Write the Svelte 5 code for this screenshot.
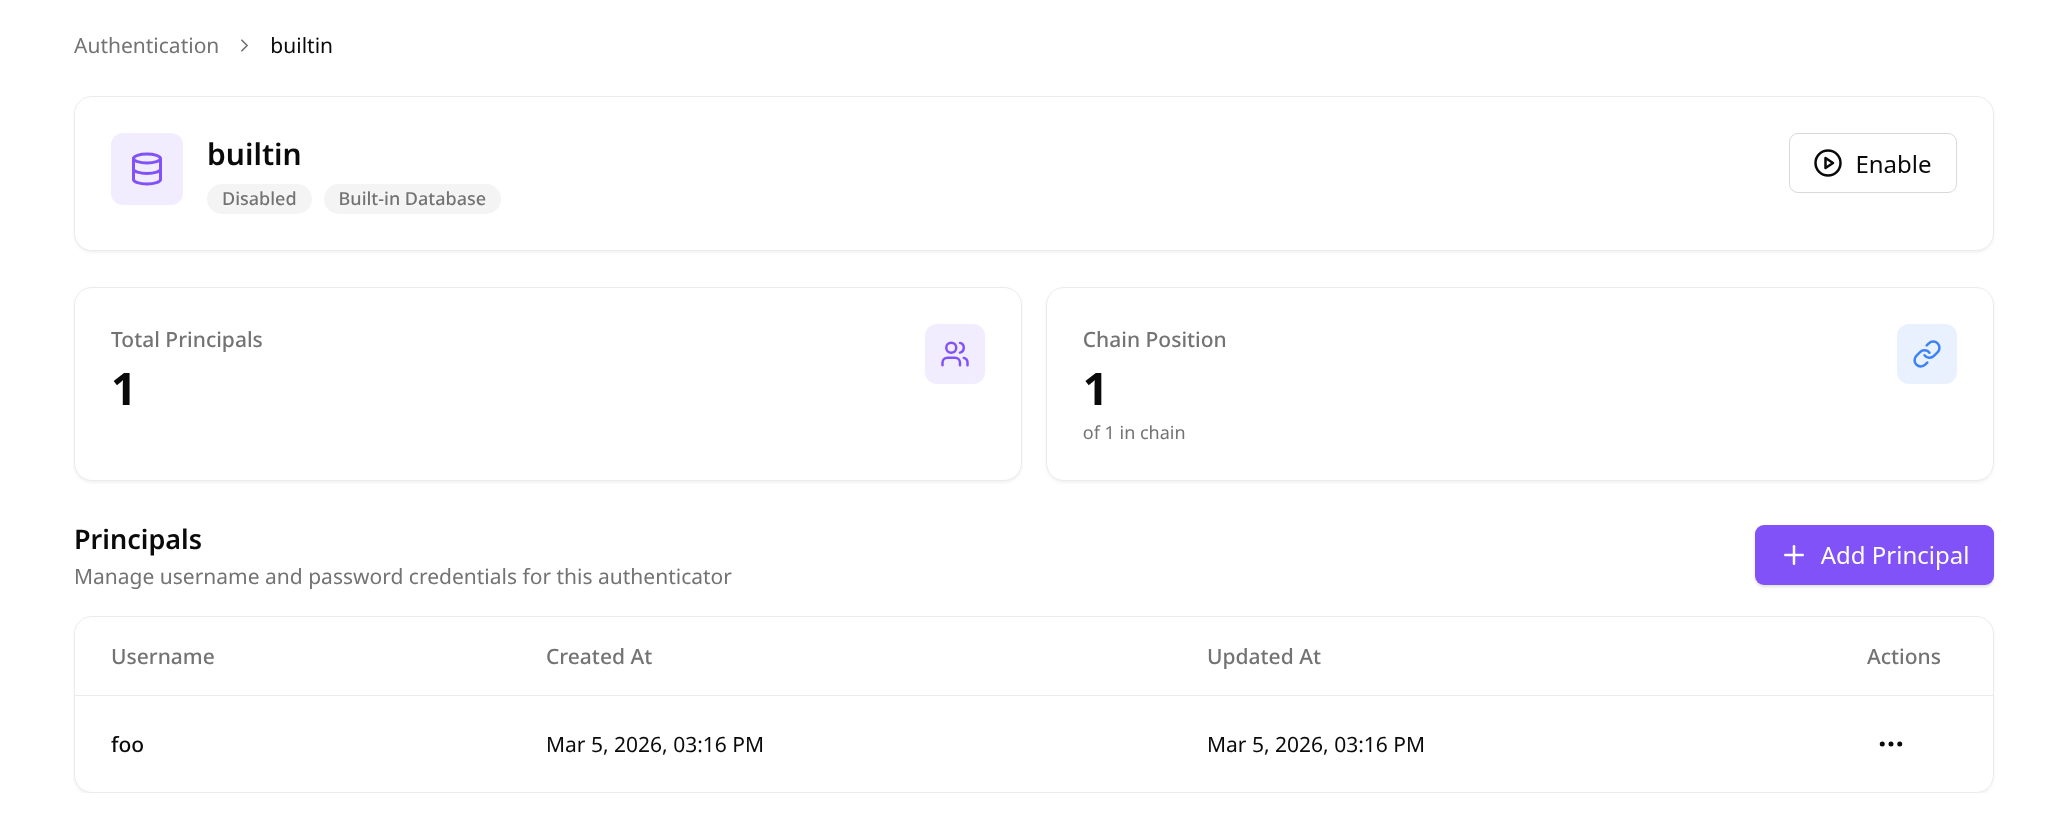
<script>
  const rows = [{ name: 'foo', created: 'Mar 5, 2026, 03:16 PM', updated: 'Mar 5, 2026, 03:16 PM' }];
</script>

<div class="page">
  <nav class="crumbs">
    <span class="crumb-link">Authentication</span>
    <svg class="chev" viewBox="0 0 24 24"><path d="m9 18 6-6-6-6" /></svg>
    <span class="crumb-current">builtin</span>
  </nav>

  <section class="card head">
    <div class="head-left">
      <div class="tile tile-lg violet">
        <svg class="ic36" viewBox="0 0 24 24"><ellipse cx="12" cy="5" rx="9" ry="3" /><path d="M3 5V19A9 3 0 0 0 21 19V5" /><path d="M3 12A9 3 0 0 0 21 12" /></svg>
      </div>
      <div>
        <h1>builtin</h1>
        <div class="badges"><span class="badge">Disabled</span><span class="badge">Built-in Database</span></div>
      </div>
    </div>
    <button class="btn outline">
      <svg class="ic30" viewBox="0 0 24 24"><circle cx="12" cy="12" r="10" /><polygon points="10 8 16 12 10 16 10 8" /></svg>
      Enable
    </button>
  </section>

  <div class="stats">
    <section class="card stat">
      <div class="stat-text">
        <div class="label">Total Principals</div>
        <div class="num">1</div>
      </div>
      <div class="tile violet">
        <svg class="ic30" viewBox="0 0 24 24"><path d="M16 21v-2a4 4 0 0 0-4-4H6a4 4 0 0 0-4 4v2" /><circle cx="9" cy="7" r="4" /><path d="M22 21v-2a4 4 0 0 0-3-3.87" /><path d="M16 3.13a4 4 0 0 1 0 7.75" /></svg>
      </div>
    </section>
    <section class="card stat">
      <div class="stat-text">
        <div class="label">Chain Position</div>
        <div class="num">1</div>
        <div class="sub">of 1 in chain</div>
      </div>
      <div class="tile blue">
        <svg class="ic30" viewBox="0 0 24 24"><path d="M10 13a5 5 0 0 0 7.54.54l3-3a5 5 0 0 0-7.07-7.07l-1.72 1.71" /><path d="M14 11a5 5 0 0 0-7.54-.54l-3 3a5 5 0 0 0 7.07 7.07l1.71-1.71" /></svg>
      </div>
    </section>
  </div>

  <div class="section-head">
    <div>
      <h2>Principals</h2>
      <p>Manage username and password credentials for this authenticator</p>
    </div>
    <button class="btn primary">
      <svg class="ic30" viewBox="0 0 24 24"><path d="M5 12h14" /><path d="M12 5v14" /></svg>
      Add Principal
    </button>
  </div>

  <section class="card table-card">
    <table>
      <colgroup><col class="c1" /><col class="c2" /><col class="c3" /><col /></colgroup>
      <thead>
        <tr><th>Username</th><th>Created At</th><th>Updated At</th><th>Actions</th></tr>
      </thead>
      <tbody>
        {#each rows as r}
          <tr>
            <td class="name">{r.name}</td>
            <td>{r.created}</td>
            <td>{r.updated}</td>
            <td>
              <button class="more" aria-label="More actions">
                <svg class="ic30" viewBox="0 0 24 24"><circle cx="12" cy="12" r="1" /><circle cx="19" cy="12" r="1" /><circle cx="5" cy="12" r="1" /></svg>
              </button>
            </td>
          </tr>
        {/each}
      </tbody>
    </table>
  </section>
</div>

<style>
  :global(body) {
    margin: 0;
    background: #fff;
    color: #0a0a0a;
    font-family: "Noto Sans", sans-serif;
    text-rendering: geometricPrecision;
  }
  .page {
    padding: 0 52.5px 0 74px;
    will-change: transform;
  }
  svg {
    fill: none;
    stroke: currentColor;
    stroke-width: 2;
    stroke-linecap: round;
    stroke-linejoin: round;
    flex: none;
    display: block;
  }
  .ic36 { width: 36px; height: 36px; }
  .ic30 { width: 30px; height: 30px; }

  .crumbs {
    display: flex;
    align-items: center;
    gap: 15px;
    height: 96px;
    padding-bottom: 5px;
    box-sizing: border-box;
    font-size: 21px;
  }
  .crumb-link { color: #737373; }
  .crumb-current { color: #0a0a0a; }
  .chev { width: 21px; height: 21px; color: #737373; }

  .card {
    background: #fff;
    border: 1px solid #ebebeb;
    border-radius: 18px;
    box-shadow: 0 1.5px 3px rgba(0, 0, 0, 0.05);
    box-sizing: border-box;
  }
  .head {
    height: 155px;
    padding: 36px;
    display: flex;
    align-items: flex-start;
    justify-content: space-between;
  }
  .head-left {
    display: flex;
    align-items: flex-start;
    gap: 24px;
  }
  .tile {
    width: 60px;
    height: 60px;
    border-radius: 12px;
    display: flex;
    align-items: center;
    justify-content: center;
  }
  .tile-lg { width: 72px; height: 72px; }
  .violet { background: #f1ecfe; color: #8152f8; }
  .blue { background: #e9f0fe; color: #3b82f6; }

  h1 {
    margin: 0;
    font-size: 30px;
    font-weight: 600;
    line-height: 42px;
  }
  .badges {
    display: flex;
    gap: 12px;
    margin-top: 9px;
  }
  .badge {
    background: #f4f4f5;
    color: #737373;
    font-size: 18px;
    line-height: 30px;
    padding: 0 15px;
    border-radius: 15px;
    font-weight: 500;
  }
  .btn {
    display: flex;
    align-items: center;
    gap: 12px;
    height: 60px;
    border-radius: 9px;
    font: inherit;
    font-size: 24px;
    cursor: pointer;
    box-sizing: border-box;
  }
  .outline {
    background: #fff;
    border: 1px solid #d9d9d9;
    color: #0a0a0a;
    width: 168px;
    justify-content: center;
  }
  .primary {
    background: #8152f8;
    color: #fff;
    border: 0;
    width: 239px;
    justify-content: center;
    box-shadow: 0 1.5px 3px rgba(0, 0, 0, 0.12);
  }

  .stats {
    display: grid;
    grid-template-columns: 1fr 1fr;
    gap: 24px;
    margin-top: 36px;
  }
  .stat {
    height: 194px;
    padding: 36px;
    display: flex;
    justify-content: space-between;
    align-items: flex-start;
  }
  .stat-text { padding-top: 1px; }
  .label {
    font-size: 21px;
    line-height: 30px;
    color: #737373;
    font-weight: 500;
  }
  .num {
    font-size: 45px;
    font-weight: 700;
    line-height: 54px;
    margin-top: 7px;
  }
  .sub {
    font-size: 18px;
    line-height: 27px;
    color: #737373;
    margin-top: 4px;
  }

  .section-head {
    display: flex;
    justify-content: space-between;
    align-items: center;
    margin-top: 39px;
  }
  h2 {
    margin: 1px 0 0;
    font-size: 27px;
    font-weight: 600;
    line-height: 36px;
  }
  .section-head p {
    margin: 5px 0 -3px;
    font-size: 21px;
    line-height: 30px;
    color: #737373;
  }

  .table-card {
    margin-top: 27px;
    overflow: hidden;
    height: 177px;
  }
  table {
    width: 100%;
    table-layout: fixed;
    border-collapse: collapse;
    font-size: 21px;
  }
  .c1 { width: 435px; }
  .c2 { width: 661px; }
  .c3 { width: 660px; }
  th {
    height: 76px;
    padding: 2px 36px 0;
    text-align: left;
    font-weight: 500;
    color: #737373;
    border-bottom: 1px solid #ebebeb;
  }
  td {
    height: 94px;
    padding: 2px 36px 0;
  }
  .name { font-weight: 500; }
  .more {
    width: 48px;
    height: 48px;
    margin-top: -2px;
    border: 0;
    background: none;
    padding: 0;
    color: #0a0a0a;
    display: flex;
    align-items: center;
    justify-content: center;
    cursor: pointer;
  }
</style>
